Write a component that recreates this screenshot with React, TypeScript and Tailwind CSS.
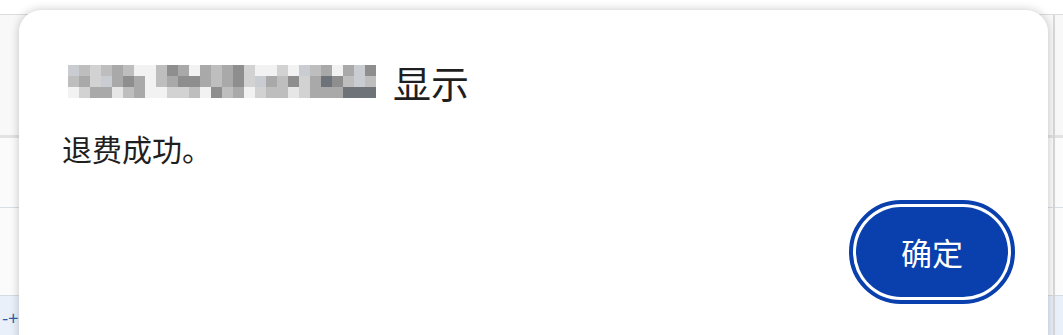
import React from "react";

// mosaic shades, full class names so tailwind picks them up
const shades = [
  "bg-[#e6e6e6]",
  "bg-[#d2d2d2]",
  "bg-[#bebebe]",
  "bg-[#a9a9a9]",
  "bg-[#8e8e8e]",
  "bg-[#c9ccd1]",
  "bg-[#f2f2f2]",
  "bg-[#6e7279]",
];

// 3 rows x 28 columns
const mosaic = [
  "5212326624363234166165236354",
  "2315343623443234153241374252",
  "6133023661126423612201333777",
];

function Mosaic() {
  return (
    <div className="flex flex-col">
      {mosaic.map((row, r) => (
        <div key={r} className="flex">
          {row.split("").map((c, i) => (
            <div key={i} className={`h-[11px] w-[11px] ${shades[Number(c)]}`} />
          ))}
        </div>
      ))}
    </div>
  );
}

export default function App() {
  return (
    <div className="relative h-[335px] w-[1063px] overflow-hidden bg-white font-['Noto_Sans_CJK_SC',sans-serif]">
      {/* page behind the dialog */}
      <div className="flex h-full flex-col">
        <div className="h-[15px] border-b border-[#dcdcdc] bg-white" />
        <div className="h-[123px] border-b-[3px] border-[#e2e2e2] bg-[#f8f8f8]" />
        <div className="h-[70px] border-b border-[#d8dde6] bg-[#fbfbfb]" />
        <div className="h-[88px] border-b border-[#d6dbe3] bg-[#fbfbfb]" />
        <div className="flex-1 bg-[#e9f0fa] pl-[2px] pt-[12px] text-[18px] leading-none text-[#2d5fa8]">-+</div>
      </div>
      <div className="absolute right-[8px] top-[15px] h-full w-[2px] bg-[#d9d9d9]" />

      {/* alert dialog */}
      <div className="absolute left-[19px] top-[10px] flex h-[345px] w-[1029px] flex-col rounded-[22px] bg-white pl-[43px] pr-[33px] pt-[49px] shadow-[0_0_10px_rgba(0,0,0,0.22)]">
        <div className="flex items-center text-[38px] leading-[46px] text-[#1f1f1f]">
          <div className="ml-[6px] mt-[-2px]">
            <Mosaic />
          </div>
          <span className="ml-[17px]">显示</span>
        </div>
        <p className="mt-[24px] text-[30px] leading-[38px] text-[#1f1f1f]">退费成功。</p>
        <div className="mt-[33px] flex justify-end">
          <button className="h-[104px] w-[166px] rounded-full border-[4px] border-[#0a40ad] bg-white p-[3px]">
            <span className="flex h-full w-full items-center justify-center rounded-full bg-[#0a40ad] text-[31px] text-white">
              确定
            </span>
          </button>
        </div>
      </div>
    </div>
  );
}
